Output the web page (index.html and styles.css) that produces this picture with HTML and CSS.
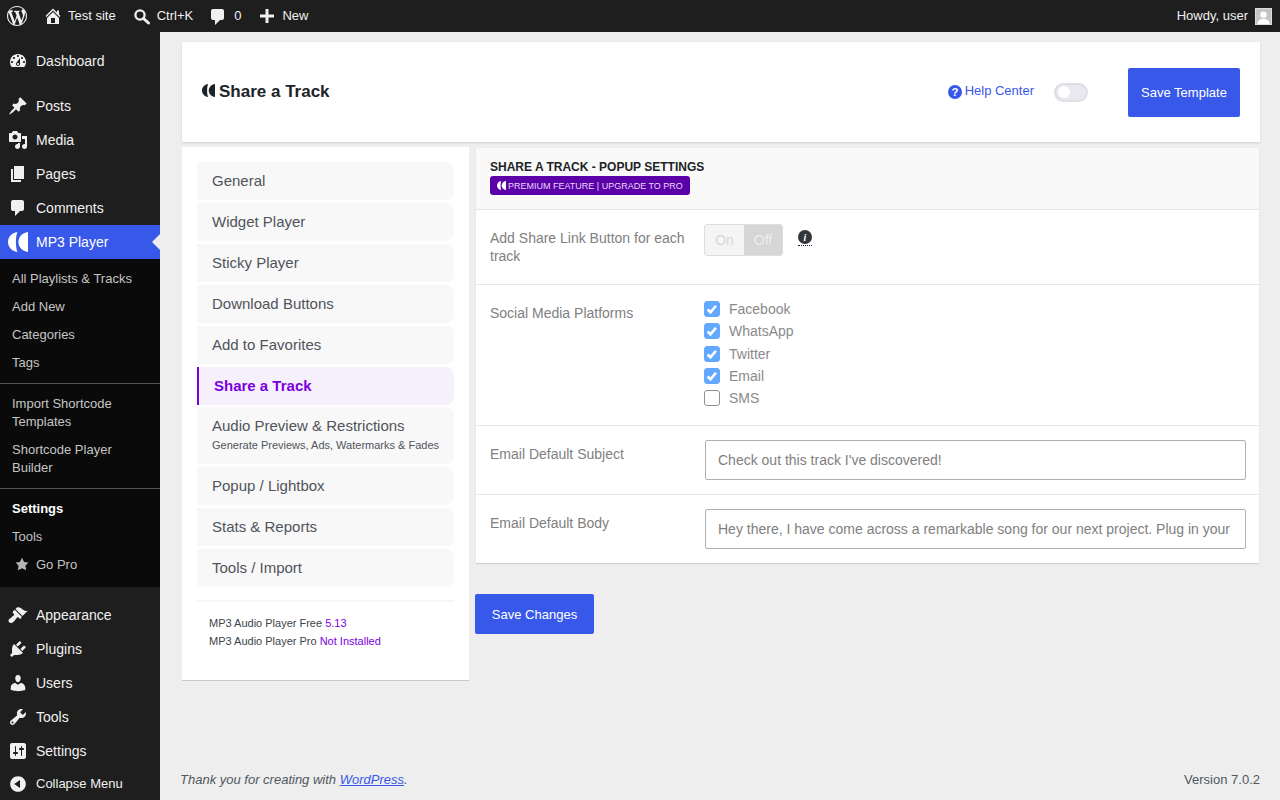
FILE: index.html
```html
<!DOCTYPE html>
<html lang="en">
<head>
<meta charset="utf-8">
<title>Share a Track</title>
<link rel="stylesheet" href="styles.css">
</head>
<body>
<svg class="defs" aria-hidden="true"><defs>
<symbol id="logo" viewBox="0 0 20 20"><path d="M9.4 0C3.6 1 0 5 0 10s3.6 9 9.4 10C7.4 15 7.4 5 9.4 0z"/><path d="M20 0C14 1 10.4 5 10.4 10S14 19 20 20z"/></symbol>
<symbol id="bubble" viewBox="0 0 20 20"><path d="M5 2h9c1.100 0 2 .9 2 2v7c0 1.100-.9 2-2 2h-2l-5 5v-5H5c-1.100 0-2-.9-2-2V4c0-1.100.9-2 2-2z"/></symbol>
</defs></svg>
<header class="adminbar">
  <div class="ab-group">
    <span class="ab-wp"><svg viewBox="0 0 20 20" class="ab-logo"><path d="M20 10c0-5.510-4.490-10-10-10C4.480 0 0 4.490 0 10c0 5.520 4.480 10 10 10 5.510 0 10-4.480 10-10zM7.780 15.370L4.370 6.220c.55-.02 1.170-.08 1.170-.8.5-.06.44-1.130-.06-1.110 0 0-1.450.11-2.370.11-.18 0-.37 0-.58-.01C4.120 2.690 6.870 1.110 10 1.110c2.330 0 4.450.87 6.050 2.340-.68-.11-1.650.39-1.650 1.580 0 .74.45 1.360.9 2.100.35.61.55 1.360.55 2.460 0 1.490-1.400 5-1.400 5l-3.030-8.370c.54-.02.82-.17.82-.17.5-.05.44-1.250-.06-1.220 0 0-1.440.12-2.380.12-.87 0-2.330-.12-2.330-.12-.5-.03-.56 1.200-.06 1.220l.92.08 1.260 3.410zM17.410 10c.24-.64.74-1.870.43-4.250.7 1.290 1.050 2.710 1.050 4.250 0 3.290-1.730 6.240-4.400 7.780.97-2.590 1.940-5.200 2.920-7.780zM6.100 18.090C3.120 16.650 1.110 13.530 1.110 10c0-1.300.23-2.480.72-3.590C3.250 10.300 4.670 14.200 6.100 18.090zm4.030-6.630l2.580 6.980c-.86.29-1.760.45-2.710.45-.79 0-1.570-.11-2.290-.33.81-2.380 1.620-4.740 2.420-7.100z"/></svg></span>
    <span class="ab-item ab-home"><svg viewBox="0 0 20 20" class="ab-icon"><path d="M16 8.500l1.530 1.530-1.060 1.060L10 4.620l-6.470 6.470-1.060-1.060L10 2.500l4 4v-2h2v4zm-6-2.460l6 5.990V18H4v-5.970zM12 17v-5H8v5h4z"/></svg>Test site</span>
    <span class="ab-item ab-search"><svg viewBox="0 0 20 20" class="ab-icon"><circle cx="8" cy="9" r="4.600" fill="none" stroke="currentColor" stroke-width="2.300"/><path d="M11.500 12.500l5 4.500" stroke="currentColor" stroke-width="3" stroke-linecap="round"/></svg>Ctrl+K</span>
    <span class="ab-item ab-comments"><svg class="ab-icon ab-bubble"><use href="#bubble"/></svg>0</span>
    <span class="ab-item ab-new"><svg viewBox="0 0 20 20" class="ab-icon"><path d="M8.500 3h3v5.500H17v3h-5.500V17h-3v-5.500H3v-3h5.500z"/></svg>New</span>
  </div>
  <div class="ab-account">Howdy, user<span class="avatar"><svg viewBox="0 0 16 16"><circle cx="8" cy="6" r="3.400" fill="#fff"/><path d="M1.500 16c.5-4 3-5.500 6.500-5.500s6 1.500 6.500 5.500z" fill="#fff"/></svg></span></div>
</header>

<div class="shell">
<nav class="sidebar">
  <ul class="menu">
    <li class="m-item gap-after"><svg viewBox="0 0 20 20" class="m-icon"><path d="M3.760 16h12.480c1.100-1.370 1.760-3.110 1.760-5 0-4.420-3.580-8-8-8s-8 3.580-8 8c0 1.890.66 3.630 1.760 5zM10 4c.55 0 1 .45 1 1s-.45 1-1 1-1-.45-1-1 .45-1 1-1zM6 6c.55 0 1 .45 1 1s-.45 1-1 1-1-.45-1-1 .45-1 1-1zm8 0c.55 0 1 .45 1 1s-.45 1-1 1-1-.45-1-1 .45-1 1-1zm-5.370 5.550L12 7v6c0 1.100-.9 2-2 2s-2-.9-2-2c0-.57.24-1.080.63-1.450zM4 10c.55 0 1 .45 1 1s-.45 1-1 1-1-.45-1-1 .45-1 1-1zm12 0c.55 0 1 .45 1 1s-.45 1-1 1-1-.45-1-1 .45-1 1-1zm-5 3c0-.55-.45-1-1-1s-1 .45-1 1 .45 1 1 1 1-.45 1-1z"/></svg>Dashboard</li>
    <li class="m-item"><svg viewBox="0 0 20 20" class="m-icon"><path d="M10.440 3.020l1.820-1.820 6.360 6.350-1.830 1.820c-1.050-.68-2.480-.57-3.410.36l-.75.75c-.92.93-1.040 2.350-.35 3.410l-1.830 1.820-2.410-2.410-2.800 2.790c-.42.42-3.380 2.710-3.800 2.290s1.860-3.390 2.280-3.810l2.790-2.790L4.100 9.360l1.830-1.820c1.050.69 2.480.57 3.400-.36l.75-.75c.93-.92 1.050-2.350.36-3.410z"/></svg>Posts</li>
    <li class="m-item"><svg viewBox="0 0 20 20" class="m-icon"><path d="M13 11V4c0-.55-.45-1-1-1h-1.670L9 1H5L3.670 3H2c-.55 0-1 .45-1 1v7c0 .55.45 1 1 1h10c.55 0 1-.45 1-1zM7 4.500c1.380 0 2.500 1.120 2.500 2.500S8.380 9.500 7 9.500 4.500 8.380 4.500 7 5.620 4.500 7 4.500zM14 6h5v10.500c0 1.380-1.120 2.500-2.500 2.500S14 17.880 14 16.500s1.120-2.500 2.500-2.500c.17 0 .34.02.5.05V9h-3V6zm-4 8.050V13h2v3.500c0 1.380-1.120 2.500-2.500 2.500S7 17.880 7 16.500 8.120 14 9.500 14c.17 0 .34.02.5.05z"/></svg>Media</li>
    <li class="m-item"><svg viewBox="0 0 20 20" class="m-icon"><path d="M6 15V2h10v13H6zm-1 1h8v2H3V5h2v11z"/></svg>Pages</li>
    <li class="m-item"><svg class="m-icon"><use href="#bubble"/></svg>Comments</li>
    <li class="m-item m-current"><svg class="m-icon m-logo"><use href="#logo"/></svg>MP3 Player</li>
  </ul>
  <ul class="submenu">
    <li>All Playlists &amp; Tracks</li>
    <li>Add New</li>
    <li>Categories</li>
    <li>Tags</li>
    <li class="sub-rule"></li>
    <li>Import Shortcode Templates</li>
    <li>Shortcode Player Builder</li>
    <li class="sub-rule"></li>
    <li class="sub-current">Settings</li>
    <li>Tools</li>
    <li class="sub-pro"><svg viewBox="0 0 20 20" class="sub-star"><path d="M10 1l3 6 6 .75-4.120 4.620L16 19l-6-3-6 3 1.130-6.630L1 7.750 7 7z"/></svg>Go Pro</li>
  </ul>
  <ul class="menu menu-lower">
    <li class="m-item"><svg viewBox="0 0 20 20" class="m-icon"><path d="M14.480 11.060L7.410 3.990l1.500-1.500c.5-.56 2.300-.47 3.510.32 1.210.8 1.430 1.280 2.910 2.100 1.180.64 2.450 1.260 4.450.85zm-.71.71L6.700 4.700 4.930 6.470c-.39.39-.39 1.020 0 1.410l1.060 1.060c.39.39.39 1.030 0 1.420-.6.6-1.430 1.110-2.210 1.690-.35.26-.7.53-1.010.84C1.430 13.230.4 14.630.45 15.700c.05 1.070 1.220 2.230 2.300 2.290 1.070.06 2.460-.98 3.810-2.320.3-.31.57-.66.83-1.010.58-.78 1.090-1.610 1.690-2.210.39-.39 1.030-.39 1.420 0l1.060 1.060c.39.39 1.020.39 1.410 0z"/></svg>Appearance</li>
    <li class="m-item"><svg viewBox="0 0 20 20" class="m-icon"><path d="M13.110 4.360L9.870 7.600 8 5.730l3.240-3.240c.35-.34 1.050-.2 1.560.32.52.51.66 1.210.31 1.550zm-8 1.770l.91-1.120 9.010 9.010-1.190.84c-.71.71-2.630 1.160-3.820 1.160H6.140L4.900 17.260c-.59.59-1.540.59-2.120 0-.59-.58-.59-1.530 0-2.120l1.240-1.240v-3.880c0-1.130.4-3.190 1.090-3.890zm7.260 3.970l3.240-3.240c.34-.35 1.040-.21 1.550.31.52.51.66 1.210.31 1.550l-3.240 3.250z"/></svg>Plugins</li>
    <li class="m-item"><svg viewBox="0 0 20 20" class="m-icon"><path d="M10 9.250c-2.270 0-2.730-3.440-2.730-3.440C7 4.020 7.820 2 9.970 2c2.160 0 2.980 2.020 2.710 3.810 0 0-.41 3.440-2.680 3.440zm0 2.570L12.720 10c2.390 0 4.520 2.330 4.520 4.530v2.490s-3.650 1.130-7.240 1.130c-3.650 0-7.240-1.130-7.240-1.130v-2.490c0-2.250 1.940-4.480 4.470-4.480z"/></svg>Users</li>
    <li class="m-item"><svg viewBox="0 0 20 20" class="m-icon"><path d="M16.680 9.770c-1.340 1.340-3.300 1.670-4.950.99l-5.410 6.520c-.99.99-2.590.99-3.580 0s-.99-2.590 0-3.570l6.520-5.420c-.68-1.650-.35-3.610.99-4.950 1.280-1.280 3.120-1.620 4.720-1.060l-2.890 2.890 2.820 2.820 2.860-2.870c.53 1.580.18 3.390-1.080 4.650zM3.810 16.210c.4.39 1.040.39 1.430 0 .4-.4.4-1.040 0-1.430-.39-.4-1.030-.4-1.430 0-.39.39-.39 1.030 0 1.430z"/></svg>Tools</li>
    <li class="m-item"><svg viewBox="0 0 20 20" class="m-icon"><path d="M18 16V4c0-1.100-.9-2-2-2H4c-1.100 0-2 .9-2 2v12c0 1.100.9 2 2 2h12c1.100 0 2-.9 2-2zM8 11h1c.55 0 1 .45 1 1s-.45 1-1 1H8v1.500c0 .28-.22.5-.5.5s-.5-.22-.5-.5V13H6c-.55 0-1-.45-1-1s.45-1 1-1h1V5.500c0-.28.22-.5.5-.5s.5.22.5.5V11zm5-2h-1c-.55 0-1-.45-1-1s.45-1 1-1h1V5.500c0-.28.22-.5.5-.5s.5.22.5.5V7h1c.55 0 1 .45 1 1s-.45 1-1 1h-1v5.500c0 .28-.22.5-.5.5s-.5-.22-.5-.5V9z"/></svg>Settings</li>
    <li class="m-item m-collapse"><svg viewBox="0 0 20 20" class="m-icon"><path d="M10 2.160c4.330 0 7.840 3.510 7.840 7.840s-3.510 7.840-7.840 7.840S2.160 14.330 2.160 10 5.710 2.160 10 2.160zm2 11.720V6.120L6.180 9.970z"/></svg>Collapse Menu</li>
  </ul>
</nav>

<main class="content">
  <section class="topcard">
    <h1 class="top-title"><svg class="top-logo"><use href="#logo"/></svg>Share a Track</h1>
    <div class="top-actions">
      <a class="help"><svg viewBox="0 0 16 16" class="help-icon"><circle cx="8" cy="8" r="8"/><text x="8" y="13" text-anchor="middle" class="help-q">?</text></svg>Help Center</a>
      <span class="switch"><span class="switch-knob"></span></span>
      <button class="btn btn-template">Save Template</button>
    </div>
  </section>

  <div class="columns">
    <aside class="tabs">
      <ul class="tab-list">
        <li class="tab">General</li>
        <li class="tab">Widget Player</li>
        <li class="tab">Sticky Player</li>
        <li class="tab">Download Buttons</li>
        <li class="tab">Add to Favorites</li>
        <li class="tab tab-active">Share a Track</li>
        <li class="tab tab-double">Audio Preview &amp; Restrictions<small class="tab-sub">Generate Previews, Ads, Watermarks &amp; Fades</small></li>
        <li class="tab">Popup / Lightbox</li>
        <li class="tab">Stats &amp; Reports</li>
        <li class="tab">Tools / Import</li>
      </ul>
      <div class="versions">
        <p>MP3 Audio Player Free <span class="accent">5.13</span></p>
        <p>MP3 Audio Player Pro <span class="accent">Not Installed</span></p>
      </div>
    </aside>

    <div class="main-col">
      <section class="panel">
        <header class="panel-head">
          <h2 class="panel-title">SHARE A TRACK - POPUP SETTINGS</h2>
          <span class="badge"><svg class="badge-logo"><use href="#logo"/></svg>PREMIUM FEATURE | UPGRADE TO PRO</span>
        </header>
        <div class="row row-toggle">
          <div class="row-label">Add Share Link Button for each track</div>
          <div class="segmented"><span class="seg seg-on">On</span><span class="seg seg-off">Off</span></div>
          <span class="tip"><svg viewBox="0 0 14 14" class="tip-icon"><circle cx="7" cy="7" r="7"/><text x="7" y="11" text-anchor="middle" class="tip-i">i</text></svg></span>
        </div>
        <div class="row row-social">
          <div class="row-label">Social Media Platforms</div>
          <ul class="checks">
            <li class="check"><span class="box box-on"><svg viewBox="0 0 16 16"><path d="M3 8.500l3.300 3.200 6.200-7.400" fill="none" stroke="#fff" stroke-width="3"/></svg></span>Facebook</li>
            <li class="check"><span class="box box-on"><svg viewBox="0 0 16 16"><path d="M3 8.500l3.300 3.200 6.200-7.400" fill="none" stroke="#fff" stroke-width="3"/></svg></span>WhatsApp</li>
            <li class="check"><span class="box box-on"><svg viewBox="0 0 16 16"><path d="M3 8.500l3.300 3.200 6.200-7.400" fill="none" stroke="#fff" stroke-width="3"/></svg></span>Twitter</li>
            <li class="check"><span class="box box-on"><svg viewBox="0 0 16 16"><path d="M3 8.500l3.300 3.200 6.200-7.400" fill="none" stroke="#fff" stroke-width="3"/></svg></span>Email</li>
            <li class="check"><span class="box"></span>SMS</li>
          </ul>
        </div>
        <div class="row row-field">
          <div class="row-label">Email Default Subject</div>
          <div class="field">Check out this track I've discovered!</div>
        </div>
        <div class="row row-field row-last">
          <div class="row-label">Email Default Body</div>
          <div class="field">Hey there, I have come across a remarkable song for our next project. Plug in your</div>
        </div>
      </section>
      <button class="btn btn-save">Save Changes</button>
    </div>
  </div>

  <footer class="foot">
    <span class="foot-thanks">Thank you for creating with <a class="foot-link">WordPress</a>.</span>
    <span class="foot-version">Version 7.0.2</span>
  </footer>
</main>
</div>
</body>
</html>
```

FILE: styles.css
```css
* { box-sizing: border-box; }
html, body { margin: 0; padding: 0; height: 100%; }
body {
  background: #eeeeee;
  font-family: "Liberation Sans", Arial, sans-serif;
  font-size: 13px;
  line-height: 18px;
  color: #3c434a;
  overflow: hidden;
}
ul { list-style: none; margin: 0; padding: 0; }
p, h1, h2 { margin: 0; }
.defs { width: 0; height: 0; display: block; }

/* admin bar */
.adminbar {
  height: 32px;
  background: #1e1e1e;
  color: #f0f0f0;
  display: flex;
  justify-content: space-between;
  align-items: center;
  padding: 0 8px 0 7px;
}
.ab-group { display: flex; align-items: center; }
.ab-wp { width: 20px; height: 20px; display: block; margin-right: 16px; }
.ab-logo { width: 20px; height: 20px; fill: #f0f0f0; display: block; }
.ab-item { display: flex; align-items: center; white-space: nowrap; }
.ab-icon { width: 20px; height: 20px; fill: #f0f0f0; margin-right: 5px; color: #f0f0f0; }
.ab-home { margin-right: 16px; }
.ab-search { margin-right: 15px; }
.ab-comments { margin-right: 16px; }
.ab-comments .ab-icon { margin-right: 6px; }
.ab-bubble { margin-top: 2px; }
.ab-new .ab-icon { margin-right: 5px; }
.ab-account { display: flex; align-items: center; }
.avatar { width: 17px; height: 17px; background: #c3c4c7; margin-left: 7px; border: 1px solid #dcdcde; overflow: hidden; display: block; }
.avatar svg { width: 15px; height: 15px; display: block; }

/* sidebar */
.shell { display: flex; height: 768px; }
.sidebar { width: 160px; flex: none; background: #1e1e1e; padding-top: 12px; color: #f0f0f0; }
.m-item { height: 34px; display: flex; align-items: center; font-size: 14px; white-space: nowrap; }
.m-icon { width: 20px; height: 20px; fill: #f0f0f0; margin: 0 8px; flex: none; }
.gap-after { margin-bottom: 11px; }
.m-current { background: #3858e9; color: #fff; position: relative; }
.m-current::after {
  content: "";
  position: absolute;
  right: 0;
  top: 50%;
  margin-top: -8px;
  border: 8px solid transparent;
  border-right-color: #eeeeee;
  border-left-width: 0;
}
.m-logo { fill: #fff; }
.submenu { background: #0a0a0a; padding: 5px 0 9px; color: #c5c5c5; }
.submenu li { padding: 6px 12px 4px; }
.submenu .sub-rule { padding: 0; height: 1px; background: #555; margin: 7px 0 5px; }
.submenu .sub-current { color: #fff; font-weight: 700; }
.sub-pro { display: flex; align-items: center; }
.sub-star { width: 14px; height: 14px; fill: #b4b4b4; margin: -2px 7px 0 3px; flex: none; }
.menu-lower { margin-top: 11px; }
.m-collapse { font-size: 13px; height: 32px; margin-top: 0; }

/* content */
.content { flex: 1; min-width: 0; display: flex; flex-direction: column; padding: 10px 20px 0 20px; }
.topcard {
  margin: 0 0 0 2px;
  height: 100px;
  background: #fff;
  box-shadow: 0 1px 2px rgba(0,0,0,.12);
  display: flex;
  justify-content: space-between;
  align-items: center;
  padding: 0 20px;
}
.top-title { font-size: 17px; line-height: 22px; font-weight: 700; color: #1d2327; display: flex; align-items: center; }
.top-logo { width: 13px; height: 13px; fill: #1d2327; margin: -3px 4px 0 0; }
.top-actions { display: flex; align-items: center; }
.help { color: #3858e9; display: flex; align-items: center; margin-right: 20px; margin-top: -2px; }
.help-icon { width: 14px; height: 14px; fill: #3858e9; margin: 1px 3px 0 0; }
.help-q { font: 700 13px "Liberation Sans", Arial, sans-serif; fill: #fff; }
.switch { width: 34px; height: 19px; border-radius: 10px; background: #e8e8ee; border: 2px solid #dedee4; margin-right: 40px; display: block; padding: 1.5px; }
.switch-knob { width: 12px; height: 12px; border-radius: 50%; background: #fff; display: block; }
.btn { background: #3858e9; color: #fff; border: 0; border-radius: 2px; font: 13px "Liberation Sans", Arial, sans-serif; cursor: pointer; padding: 0; }
.btn-template { width: 112px; height: 49px; margin-top: 1px; }

.columns { display: flex; align-items: flex-start; margin-top: 5px; }
.tabs {
  width: 287px;
  margin-left: 2px;
  flex: none;
  height: 534px;
  background: #fff;
  border-bottom: 1px solid #c8c8c8;
  padding: 15px 15px 0;
}
.tab-list { display: flex; flex-direction: column; }
.tab {
  height: 38px;
  margin-bottom: 3px;
  padding: 0 15px;
  background: #f8f8f8;
  border-radius: 0 8px 8px 0;
  font-size: 15px;
  color: #50545b;
  display: flex;
  flex-direction: column;
  justify-content: center;
}
.tab-active { background: #f6f0fd; color: #7a00df; font-weight: 700; border-left: 2px solid #7a00df; margin-bottom: 2px; }
.tab-double { height: 57px; padding-bottom: 1px; }
.tab-sub { font-size: 11px; line-height: 16px; margin-top: 2px; white-space: nowrap; }
.versions { margin-top: 10px; border-top: 2px solid #f6f6f6; padding: 12px 12px 0; font-size: 11px; }
.accent { color: #7a00df; }

.main-col { margin-left: 6px; width: 784px; }
.panel { background: #fff; margin: 1px 0 0 1px; width: 783px; box-shadow: 0 1px 1px rgba(0,0,0,.12); }
.panel-head { height: 62px; background: #f9f9f9; padding: 12px 14px 0; border-bottom: 1px solid #e6e6e6; }
.panel-title { font-size: 12px; line-height: 14px; font-weight: 700; color: #1d2327; }
.badge {
  display: inline-flex;
  align-items: center;
  height: 19px;
  padding: 0 7px;
  background: #5b00a8;
  color: #e9d8ff;
  font-size: 9px;
  border-radius: 3px;
  margin-top: 2px;
  white-space: nowrap;
}
.badge-logo { width: 9px; height: 9px; fill: #fff; margin-right: 2px; }

.row { display: flex; align-items: flex-start; border-bottom: 1px solid #e8e8e8; padding: 0 14px; color: #808080; }
.row-label { width: 214px; flex: none; font-size: 14px; line-height: 18px; padding-right: 10px; }
.row-toggle { height: 75px; padding-top: 19px; }
.segmented { width: 79px; height: 32px; margin-top: -5px; display: flex; font-size: 14px; border: 1px solid #dedede; border-radius: 3px; overflow: hidden; color: #d6d6d6; }
.seg { display: flex; align-items: center; justify-content: center; }
.seg-on { width: 39px; background: #f5f5f5; }
.seg-off { flex: 1; background: #d6d6d6; color: #ededed; }
.tip { margin: 1px 0 0 15px; height: 16px; border-bottom: 1px dotted #1d2327; display: block; width: 14px; }
.tip-icon { width: 14px; height: 14px; fill: #32373c; display: block; }
.tip-i { font: italic 700 10px "Liberation Serif", serif; fill: #fff; }
.row-social { height: 141px; padding-top: 19px; }
.checks { display: flex; flex-direction: column; margin-top: -6px; }
.check { display: flex; align-items: center; height: 22.25px; font-size: 14px; color: #8a8a8a; }
.box { width: 16px; height: 16px; border: 1px solid #8c8f94; border-radius: 3px; background: #fff; margin-right: 9px; display: block; flex: none; }
.box-on { background: #62a8ff; border-color: #62a8ff; }
.box svg { width: 14px; height: 14px; display: block; }
.row-field { height: 69px; padding-top: 19px; }
.row-last { border-bottom: 0; height: 68px; }
.row-field .row-label { width: 215px; margin-top: 0; }
.field {
  width: 541px;
  height: 40px;
  margin-top: -5px;
  border: 1px solid #b0b0b0;
  border-radius: 2px;
  padding: 0 12px;
  font-size: 14px;
  line-height: 38px;
  color: #808080;
  white-space: nowrap;
  overflow: hidden;
  flex: none;
}
.btn-save { display: block; width: 119px; height: 40px; margin-top: 31px; }

.foot { margin-top: auto; height: 52px; padding-top: 23px; margin-left: 0; display: flex; justify-content: space-between; color: #50575e; font-size: 13px; }
.foot-thanks { font-style: italic; }
.foot-link { color: #3858e9; text-decoration: underline; }
```
